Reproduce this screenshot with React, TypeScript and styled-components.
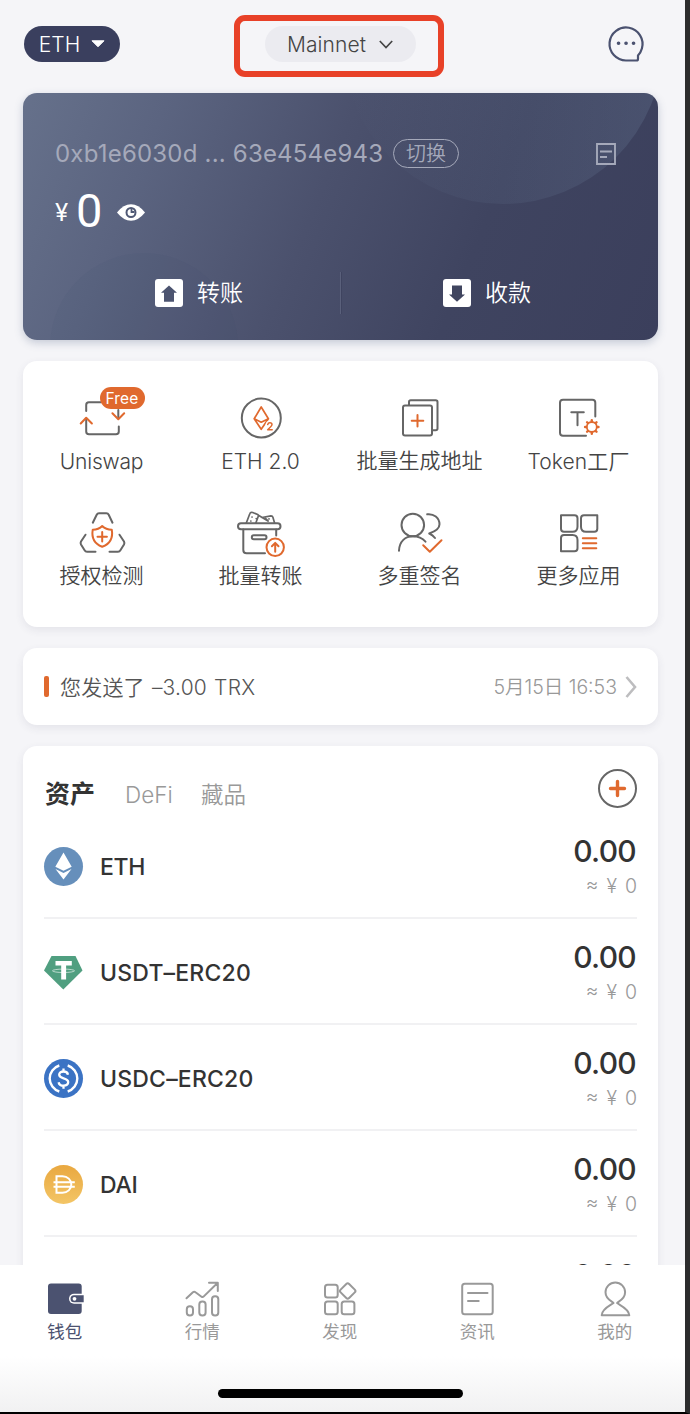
import React from 'react';
import styled, { createGlobalStyle } from 'styled-components';

const GRAY = '#666666';
const ORANGE = '#e0692e';
const NAVY = '#4b5270';
const MUTED = '#999999';

const GlobalStyle = createGlobalStyle`
  * { box-sizing: border-box; }
  body {
    margin: 0;
    background: #2c2c2d;
    font-family: Inter, 'Noto Sans CJK SC', sans-serif;
    color: #333;
  }
`;

const Screen = styled.div`
  width: 690px;
  height: 1414px;
  border-right: 5px solid #2c2c2d;
  border-bottom: 2px solid #000;
  background: #f5f5f8;
  display: flex;
  flex-direction: column;
  overflow: hidden;
`;

const Content = styled.main`
  height: 1265px;
  padding: 0 27px 0 23px;
  overflow: hidden;
  flex: none;
`;

const Header = styled.header`
  height: 93px;
  padding: 15px 14px 0 1px;
  display: flex;
  align-items: flex-start;
`;

const Pill = styled.button<{ $dark?: boolean }>`
  width: ${p => (p.$dark ? 96 : 151)}px;
  height: 36px;
  margin-top: ${p => (p.$dark ? 11 : 0)}px;
  border: 0;
  border-radius: 18px;
  padding: 0;
  display: flex;
  align-items: center;
  justify-content: center;
  gap: ${p => (p.$dark ? 11 : 13)}px;
  background: ${p => (p.$dark ? '#3a3f5e' : '#ebebf0')};
  color: ${p => (p.$dark ? '#fff' : '#444')};
  font: 350 21px Inter, sans-serif;
  letter-spacing: ${p => (p.$dark ? 0 : 0.1)}px;
`;

const NetworkFrame = styled.div`
  width: 210px;
  height: 62px;
  margin: 0 auto 0 114px;
  border: 6px solid #e84128;
  border-radius: 11px;
  display: flex;
  align-items: center;
  justify-content: center;
  padding-left: 2px;
  padding-bottom: 4px;
`;

const ChatButton = styled.div`
  width: 36px;
  height: 37px;
  margin-top: 11px;
`;

const Svg = styled.svg`
  display: block;
  fill: none;
  overflow: visible;
  flex: none;
`;

const WalletCard = styled.section`
  height: 247px;
  border-radius: 14px;
  position: relative;
  overflow: hidden;
  background: linear-gradient(112deg, #66718b 0%, #5b6480 20%, #4b516d 46%, #3f4460 70%, #3b3f5c 100%);
`;

const CardShadow = styled.div`
  border-radius: 14px;
  box-shadow: 0 3px 8px rgba(74, 92, 130, 0.28);
`;

const Decoration = styled.svg`
  position: absolute;
  inset: 0;
`;

const AddressRow = styled.div`
  position: relative;
  height: 29px;
  margin: 46px 42px 0 32px;
  display: flex;
  align-items: center;
  color: #a5a9ba;
`;

const Address = styled.span`
  width: 338px;
  font-size: 24px;
  font-weight: 380;
  letter-spacing: 0.2px;
  white-space: nowrap;
`;

const SwitchButton = styled.button`
  width: 66px;
  height: 29px;
  border: 1px solid #a5a9ba;
  border-radius: 15px;
  background: none;
  color: inherit;
  padding: 0 0 2px;
  margin-right: auto;
  font: 350 20px/25px 'Noto Sans CJK SC', sans-serif;
`;

const BalanceRow = styled.div`
  position: relative;
  height: 50px;
  margin: 18px 0 0 32px;
  display: flex;
  align-items: center;
  color: #fff;
`;

const Currency = styled.span`
  width: 21px;
  font-size: 24px;
  font-weight: 400;
  line-height: 50px;
  padding-top: 4px;
`;

const Balance = styled.span`
  width: 41px;
  font: 400 47px/50px Roboto, sans-serif;
`;

const Eye = styled.div`
  padding-top: 3px;
`;

const Actions = styled.div`
  position: relative;
  height: 42px;
  margin: 36px 32px 0;
  display: flex;
  align-items: center;
`;

const Action = styled.div`
  flex: 0 0 285px;
  padding-left: 100px;
  display: flex;
  align-items: center;
  gap: 14px;
  color: #fff;
  font-size: 23px;
  font-weight: 350;
  line-height: 42px;
`;

const ActionDivider = styled.div`
  flex: 0 0 2px;
  height: 42px;
  margin-right: 1px;
  border-left: 1px solid #5a607b;
  border-right: 1px solid #3f4460;
`;

const Panel = styled.section<{ $h: number }>`
  height: ${p => p.$h}px;
  margin-top: 21px;
  border-radius: 14px;
  background: #fff;
  box-shadow: 0 3px 9px rgba(60, 60, 90, 0.09);
`;

const AppGrid = styled(Panel)`
  display: grid;
  grid-template-columns: 157px 161px 157px 161px;
  grid-auto-rows: 115px;
  padding-top: 32px;
`;

const AppItem = styled.div`
  display: flex;
  flex-direction: column;
  align-items: center;
`;

const IconBox = styled.div`
  position: relative;
  width: 50px;
  height: 50px;
`;

const AppLabel = styled.span<{ $latin?: boolean; $ls?: number }>`
  padding-top: ${p => (p.$latin ? 1 : 0)}px;
  font-size: 21px;
  font-weight: 350;
  line-height: 36px;
  color: #444;
  letter-spacing: ${p => p.$ls ?? 0}px;
  white-space: nowrap;
`;

const FreeBadge = styled.span`
  position: absolute;
  left: 23px;
  top: -6px;
  width: 45px;
  height: 22px;
  border-radius: 11px;
  background: ${ORANGE};
  color: #fff;
  font-size: 15.5px;
  line-height: 23px;
  text-align: center;
  letter-spacing: 0.2px;
`;

const Notice = styled(Panel)`
  display: flex;
  align-items: center;
  padding: 0 21px;
`;

const NoticeMark = styled.i`
  width: 5px;
  height: 21px;
  border-radius: 2px;
  background: ${ORANGE};
  margin-right: 11px;
`;

const NoticeText = styled.span`
  font-size: 21px;
  font-weight: 350;
  letter-spacing: 0.2px;
  word-spacing: 1px;
  color: #555;
  margin-right: auto;
  padding-bottom: 2px;
`;

const NoticeDate = styled.span`
  font-size: 19.5px;
  font-weight: 350;
  color: ${MUTED};
  margin-right: 8px;
  padding-bottom: 2px;
`;

const AssetTabs = styled.div`
  height: 67px;
  padding: 23px 21px 0 22px;
  display: flex;
  align-items: flex-start;
`;

const AssetTab = styled.span<{ $active?: boolean; $w: number }>`
  width: ${p => p.$w}px;
  font-size: ${p => (p.$active ? 25 : 22.5)}px;
  font-weight: ${p => (p.$active ? 700 : 350)};
  line-height: 51px;
  color: ${p => (p.$active ? '#333' : MUTED)};
`;

const AddButton = styled.div`
  margin-left: auto;
`;

const AssetRow = styled.div`
  height: 106px;
  margin: 0 21px;
  display: flex;
  align-items: center;
  border-bottom: 2px solid #f1f1f3;
`;

const AssetIcon = styled.div`
  padding-top: 2px;
`;

const AssetName = styled.span<{ $ls?: number }>`
  margin-left: 17px;
  padding-top: 3px;
  font-size: 23px;
  font-weight: 500;
  letter-spacing: ${p => p.$ls ?? 0}px;
`;

const AssetValues = styled.div`
  margin-left: auto;
  height: 100%;
  padding-top: 17px;
  text-align: right;
`;

const Amount = styled.div`
  font-size: 30px;
  font-weight: 550;
  line-height: 42px;
  letter-spacing: -0.7px;
  padding-right: 1px;
`;

const Approx = styled.div`
  font-size: 19.5px;
  font-weight: 350;
  line-height: 28px;
  word-spacing: 2.5px;
  color: ${MUTED};
`;

const TabBar = styled.nav`
  height: 147px;
  flex: none;
  background: linear-gradient(#fff 62%, #f1f1f2);
`;

const TabList = styled.div`
  display: flex;
  margin-left: -4px;
  width: 688px;
  padding-top: 14px;
`;

const Tab = styled.div<{ $active?: boolean }>`
  flex: 0 0 137.5px;
  display: flex;
  flex-direction: column;
  align-items: center;
  font-size: 17.5px;
  line-height: 26px;
  color: ${p => (p.$active ? NAVY : MUTED)};
`;

const HomeIndicator = styled.div`
  width: 245px;
  height: 9px;
  border-radius: 5px;
  background: #000;
  margin: 44px 0 0 218px;
`;

function Icon({ size = 50, children }: { size?: number; children: React.ReactNode }) {
  return (
    <Svg width={size} height={size} viewBox={`0 0 ${size} ${size}`} stroke={GRAY} strokeWidth={2} strokeLinecap="round" strokeLinejoin="round">
      {children}
    </Svg>
  );
}

const gearTeeth = Array.from({ length: 8 }, (_, i) => i * 45);

const apps = [
  {
    label: 'Uniswap',
    latin: true,
    ls: -0.2,
    badge: 'Free',
    icon: (
      <>
        <path d="M9.2 18v-6q0-2.700 2.700-2.700H24M9.200 26v12.500q0 2.800 2.800 2.800H39q2.800 0 2.800-2.800V33.500" />
        <path d="M41.300 17v8" />
        <path d="M3.700 30.500l5.500-5.800 5.700 5.800M35.400 20.300l5.900 6 5.900-6" stroke={ORANGE} />
      </>
    ),
  },
  {
    label: 'ETH 2.0',
    latin: true,
    ls: 0,
    icon: (
      <>
        <circle cx="25.300" cy="25" r="19.500" />
        <path d="M25.200 14l-7 11.700 7 10.600 7.200-10.600zM18.200 25.700l7 3.500 7.200-3.500" stroke={ORANGE} strokeWidth="1.700" />
        <path d="M31.500 31.600q.4-1.900 2.300-1.900 2.200 0 2.200 1.900 0 1.300-4.500 5.300h4.700" stroke="#fff" strokeWidth="4" />
        <path d="M31.700 31.600q.4-1.900 2.200-1.900 2.100 0 2.100 1.900 0 1.300-4.300 5.200h4.500" stroke={ORANGE} strokeWidth="1.500" />
      </>
    ),
  },
  {
    label: '批量生成地址',
    icon: (
      <>
        <rect x="8" y="12.500" width="29" height="30" rx="2" />
        <path d="M14 12V9q0-1.700 1.700-1.700h25q1.800 0 1.800 1.700v26.500q0 1.800-1.800 1.800H38" />
        <path d="M16.700 27.700h11.600M22.500 21.900v11.600" stroke={ORANGE} />
      </>
    ),
  },
  {
    label: 'Token工厂',
    latin: true,
    ls: 0.1,
    icon: (
      <>
        <path d="M41.300 23.500V9.700q0-3-3-3H9q-3 0-3 3v30q0 3 3 3h23M17.300 19.300h12.500M23.500 19.300v13" />
        <g stroke={ORANGE} strokeWidth="1.800">
          <circle cx="37.800" cy="34" r="5" />
          {gearTeeth.map(a => (
            <path key={a} d="M37.800 28.300v-1" strokeWidth="2.400" transform={`rotate(${a} 37.800 34)`} />
          ))}
        </g>
      </>
    ),
  },
  {
    label: '授权检测',
    icon: (
      <>
        <path d="M15.800 14.700l3.900-8q.7-1.400 2.300-1.400h7.400q1.600 0 2.300 1.400l3.800 8M8.500 26.700L4 33.500q-.8 1.500 0 3l3.600 5.800q.8 1.400 2.400 1.400h8.500M42.500 26.700L47 33.500q.8 1.500 0 3l-3.600 5.800q-.8 1.400-2.400 1.400h-8.500" />
        <path d="M25.200 18q-3.500 3.600-9.500 3.800-2 12.400 9.500 17 11.700-4.600 9.600-17-5.900-.2-9.600-3.800zM20.500 28.700h9.400M25.200 24v9.400" stroke={ORANGE} />
      </>
    ),
  },
  {
    label: '批量转账',
    icon: (
      <>
        <rect x="2" y="15.200" width="42.500" height="6" rx="3" />
        <path d="M7.300 21.500V42q0 3.300 3.300 3.300H29M40.200 21.500v6" />
        <rect x="15.800" y="27.300" width="14.700" height="4" rx="2" />
        <path d="M10.300 15l3.400-9q.8-2.300 3-1.500l5 2q1 .6.500 2L20 14.500M22 7l10 6M26 9.500l9-1.700q1.500 0 1.900 1.400l1.600 5.600M16 9h.1M20.200 10.500h.1M14.800 13h.1M29.700 10.500l2.500 2.500M33 10.800v.1" strokeWidth="1.700" />
        <circle cx="39.200" cy="39.300" r="8.700" stroke={ORANGE} fill="#fff" />
        <path d="M39.200 43.700v-8.600M35.900 38.200l3.300-3.300 3.300 3.300" stroke={ORANGE} />
      </>
    ),
  },
  {
    label: '多重签名',
    icon: (
      <>
        <circle cx="17.800" cy="17" r="11.300" />
        <path d="M4 42.700C4.400 33 10.500 28.300 17.800 28.300c5.700 0 9.700 2 12.700 5.400M32.200 6.300c6.500-.8 12.300 3.500 12.300 10 0 5.300-5 7.500-10.300 9.200q3.500 1.300 5.800 4.500" />
        <path d="M28.200 37.300l6.600 6.400 11.700-11.500" stroke={ORANGE} />
      </>
    ),
  },
  {
    label: '更多应用',
    icon: (
      <>
        <path d="M7 7.200h13.500q3 0 3 3v8.500q0 5-5 5H10q-3 0-3-3zM43.300 7.200H30q-3 0-3 3v8.500q0 5 5 5h8.300q3 0 3-3zM7 43.300h13.500q3 0 3-3V32q0-5-5-5H10q-3 0-3 3z" />
        <path d="M28.800 30.300h13.500M28.800 35.300h13.500M28.800 40.300h13.500" stroke={ORANGE} />
      </>
    ),
  },
];

const assets = [
  {
    name: 'ETH',
    ls: -0.3,
    icon: (
      <>
        <circle cx="19.500" cy="19.500" r="19.500" fill="#668fbb" />
        <path d="M19.500 5.500l8.200 14.200-8.200 4-8.200-4zM11.500 22l8 4 8-4-8 10.500z" fill="#fff" />
      </>
    ),
  },
  {
    name: 'USDT–ERC20',
    ls: 0.2,
    icon: (
      <>
        <path d="M7.500 3h24l7 14.500L19.300 36.500 0 17.500z" fill="#509f80" />
        <path d="M11.500 8h16.300v4.400h-5.700v14h-4.900v-14h-5.700z" fill="#fff" />
        <ellipse cx="19.500" cy="17.800" rx="11" ry="1.700" stroke="#fff" strokeWidth=".6" />
      </>
    ),
  },
  {
    name: 'USDC–ERC20',
    ls: 0.2,
    icon: (
      <>
        <circle cx="19.500" cy="19.500" r="19.500" fill="#3b73c4" />
        <path d="M15.300 6.500a13.600 13.600 0 0 0 0 26M23.700 6.500a13.600 13.600 0 0 1 0 26" stroke="#fff" strokeWidth="2.400" />
        <path d="M24 15.700c-.4-2.200-2-3.200-4.500-3.200-2.700 0-4.300 1.300-4.300 3.300 0 4.500 9 2.500 9 7.300 0 2.200-1.800 3.600-4.700 3.600-2.700 0-4.500-1.200-4.900-3.500M19.500 9.500v3M19.500 26.700v3" stroke="#fff" strokeWidth="2.300" />
      </>
    ),
  },
  {
    name: 'DAI',
    ls: -0.3,
    icon: (
      <>
        <defs>
          <linearGradient id="dai" x1="0" y1="0" x2="0" y2="1">
            <stop offset="0" stopColor="#e9a840" />
            <stop offset="1" stopColor="#f3c566" />
          </linearGradient>
        </defs>
        <circle cx="19.500" cy="19.500" r="19.500" fill="url(#dai)" />
        <path d="M12.500 11.300h6c5 0 8.800 3.500 8.800 8.200s-3.800 8.200-8.800 8.200h-6zM9.500 17.200h21.300M9.500 21.800h21.300" stroke="#fff" strokeWidth="2" />
      </>
    ),
  },
  { name: '', ls: 0, icon: null },
];

const tabs = [
  {
    label: '钱包',
    icon: (
      <>
        <rect x="3" y="4.500" width="33.700" height="30.500" rx="3" fill={NAVY} stroke="none" />
        <path d="M40 14.800H29a5 5 0 0 0 0 10h11z" fill="#fff" stroke="none" />
        <path d="M38.700 16.300H29a3.500 3.500 0 0 0 0 7h9.700z" fill={NAVY} stroke="none" />
        <circle cx="29.500" cy="19.800" r="1.900" fill="#fff" stroke="none" />
      </>
    ),
  },
  {
    label: '行情',
    icon: (
      <>
        <path d="M4.500 19.300l6.400-6q1.300-1 2.600 0l6 4.400q1.200.8 2.300-.3L35.500 4M27 3.800h8.800V12" />
        <rect x="4.800" y="27.300" width="6.200" height="9.200" rx="3" />
        <rect x="17.300" y="22.500" width="6.300" height="14" rx="3" />
        <rect x="30" y="17.300" width="6.300" height="19.200" rx="3" />
      </>
    ),
  },
  {
    label: '发现',
    icon: (
      <>
        <rect x="5" y="5.700" width="12.700" height="12.700" rx="2.500" />
        <rect x="5" y="22.500" width="12.700" height="12.700" rx="2.500" />
        <rect x="21.700" y="22.500" width="12.700" height="12.700" rx="2.500" />
        <rect x="21.700" y="6" width="12" height="12" rx="2" transform="rotate(45 27.700 12)" />
      </>
    ),
  },
  {
    label: '资讯',
    icon: (
      <>
        <rect x="5.200" y="4.700" width="30.500" height="30.500" rx="2.500" />
        <path d="M11 14h19.500M11 22h10.700" />
      </>
    ),
  },
  {
    label: '我的',
    icon: <path d="M18.500 24c-1-1.500-8-3.500-8-10.700a9.800 9.800 0 0 1 19.600 0c0 7.200-7 9.200-8 10.700 3 2.500 11.700 5.500 12.200 12.200H6.700C7.200 29.500 15.500 26.500 18.500 24z" />,
  },
];

export default function App() {
  return (
    <>
      <GlobalStyle />
      <Screen>
        <Content>
          <Header>
            <Pill $dark>
              ETH
              <Svg width="14" height="8" viewBox="0 0 14 8">
                <path d="M1 .8h12L7 6.800z" fill="#fff" stroke="#fff" strokeLinejoin="round" />
              </Svg>
            </Pill>
            <NetworkFrame>
              <Pill>
                Mainnet
                <Svg width="14" height="9" viewBox="0 0 14 9">
                  <path d="M.8 1l6.200 6.500L13.200 1" stroke="#444" strokeWidth="1.700" />
                </Svg>
              </Pill>
            </NetworkFrame>
            <ChatButton>
              <Svg width="36" height="37" viewBox="0 0 36 37" stroke={NAVY} strokeWidth="2.200" strokeLinejoin="round">
                <path d="M18 34.500a16.500 16.500 0 1 1 15.900-12Q32.800 26.500 30 29.500v3.500q0 1.500-1.500 1.500z" />
                <path d="M10.500 17.300h.1M18 17.300h.1M25.500 17.300h.1" strokeWidth="3.600" strokeLinecap="round" />
              </Svg>
            </ChatButton>
          </Header>

          <CardShadow>
            <WalletCard>
              <Decoration width="635" height="247" viewBox="0 0 635 247">
                <defs>
                  <linearGradient id="halo" x1="0" y1="0" x2="1" y2="0">
                    <stop offset="0" stopColor="#7084a0" stopOpacity="0" />
                    <stop offset="1" stopColor="#7084a0" stopOpacity=".25" />
                  </linearGradient>
                </defs>
                <circle cx="480" cy="-49" r="160" fill="url(#halo)" />
                <circle cx="121" cy="254" r="94" fill="#3a4666" fillOpacity=".06" />
              </Decoration>
              <AddressRow>
                <Address>0xb1e6030d ... 63e454e943</Address>
                <SwitchButton>切换</SwitchButton>
                <Svg width="20" height="22" viewBox="0 0 20 22" stroke="#a5a9ba" strokeWidth="1.900">
                  <path d="M1 1h18v20H1zM4 8.500h12M4 14h7" />
                </Svg>
              </AddressRow>
              <BalanceRow>
                <Currency>¥</Currency>
                <Balance>0</Balance>
                <Eye>
                  <Svg width="28" height="17" viewBox="0 0 28 17">
                    <path d="M0 8.500Q6.500.3 14 .3t14 8.200Q21.500 16.700 14 16.700T0 8.500z" fill="#fff" />
                    <circle cx="14" cy="8.500" r="4.500" stroke="#505975" strokeWidth="2" />
                    <path d="M14.500 5v3h3" stroke="#505975" strokeWidth="1.800" />
                  </Svg>
                </Eye>
              </BalanceRow>
              <Actions>
                <Action>
                  <Svg width="28" height="28" viewBox="0 0 28 28">
                    <rect width="28" height="28" rx="3" fill="#fff" />
                    <path d="M14 6.500l8 7.200h-3v9H9v-9H6z" fill="#4c5470" />
                  </Svg>
                  转账
                </Action>
                <ActionDivider />
                <Action>
                  <Svg width="28" height="28" viewBox="0 0 28 28">
                    <rect width="28" height="28" rx="3" fill="#fff" />
                    <path d="M14 22.700l8-7.300h-3v-9H9v9H6z" fill="#40455f" />
                  </Svg>
                  收款
                </Action>
              </Actions>
            </WalletCard>
          </CardShadow>

          <AppGrid $h={266}>
            {apps.map(app => (
              <AppItem key={app.label}>
                <IconBox>
                  <Icon>{app.icon}</Icon>
                  {app.badge && <FreeBadge>{app.badge}</FreeBadge>}
                </IconBox>
                <AppLabel $latin={app.latin} $ls={app.ls}>{app.label}</AppLabel>
              </AppItem>
            ))}
          </AppGrid>

          <Notice $h={77}>
            <NoticeMark />
            <NoticeText>您发送了 –3.00 TRX</NoticeText>
            <NoticeDate>5月15日 16:53</NoticeDate>
            <Svg width="12" height="22" viewBox="0 0 12 22">
              <path d="M1.500 1L10 11 1.500 21" stroke="#bdbdbf" strokeWidth="2.600" />
            </Svg>
          </Notice>

          <Panel $h={700}>
            <AssetTabs>
              <AssetTab $active $w={80}>资产</AssetTab>
              <AssetTab $w={76}>DeFi</AssetTab>
              <AssetTab $w={60}>藏品</AssetTab>
              <AddButton>
                <Svg width="39" height="39" viewBox="0 0 39 39">
                  <circle cx="19.500" cy="19.500" r="18.500" stroke={GRAY} strokeWidth="2" />
                  <path d="M12.500 19.500h14M19.500 12.500v14" stroke={ORANGE} strokeWidth="3.400" strokeLinecap="round" />
                </Svg>
              </AddButton>
            </AssetTabs>
            {assets.map(asset => (
              <AssetRow key={asset.name}>
                <AssetIcon>
                  <Svg width="39" height="39" viewBox="0 0 39 39">{asset.icon}</Svg>
                </AssetIcon>
                <AssetName $ls={asset.ls}>{asset.name}</AssetName>
                <AssetValues>
                  <Amount>0.00</Amount>
                  <Approx>≈ ¥ 0</Approx>
                </AssetValues>
              </AssetRow>
            ))}
          </Panel>
        </Content>

        <TabBar>
          <TabList>
            {tabs.map((tab, i) => (
              <Tab key={tab.label} $active={i === 0}>
                <Svg width="40" height="40" viewBox="0 0 40 40" stroke={MUTED} strokeWidth={2} strokeLinecap="round" strokeLinejoin="round">
                  {tab.icon}
                </Svg>
                {tab.label}
              </Tab>
            ))}
          </TabList>
          <HomeIndicator />
        </TabBar>
      </Screen>
    </>
  );
}
